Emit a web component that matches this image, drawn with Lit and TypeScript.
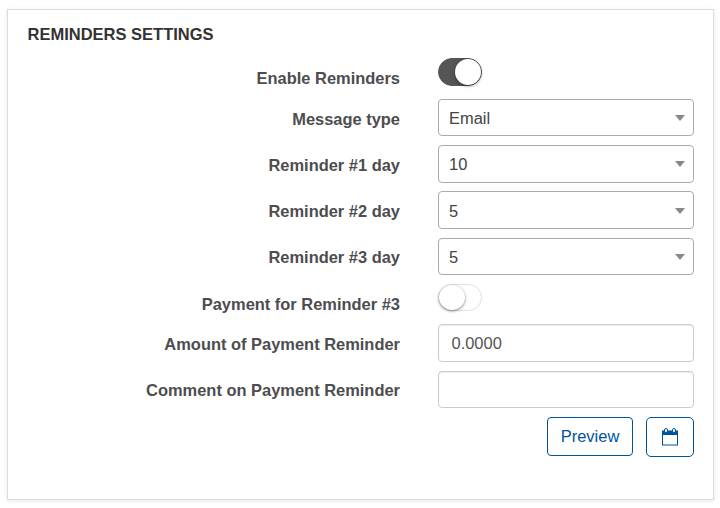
import { LitElement, html, css } from "lit";
import { customElement, property } from "lit/decorators.js";

@customElement("toggle-switch")
class ToggleSwitch extends LitElement {
  @property({ type: Boolean, reflect: true }) on = false;
  static styles = css`
    :host { display: block; width: 44px; height: 28px; }
    .track { box-sizing: border-box; display: flex; width: 44px; height: 27px; padding: 0; border: 1px solid #dfdfdf; border-radius: 14px; background: #fff; }
    :host([on]) .track { height: 28px; border-color: #555557; background: #555557; justify-content: flex-end; }
    .knob { width: 26px; height: 25px; border-radius: 50%; background: #fff; box-shadow: 0 1px 3px rgba(0, 0, 0, 0.5); }
    :host([on]) .knob { height: 26px; }
  `;
  render() {
    return html`<div class="track"><div class="knob"></div></div>`;
  }
}

@customElement("select-box")
class SelectBox extends LitElement {
  @property() value = "";
  static styles = css`
    :host { display: flex; box-sizing: border-box; height: 37.5px; border: 1px solid #aaa; border-radius: 4px; padding: 1px 8px 0 10px; align-items: center; justify-content: space-between; background: #fff; color: #444; }
    .arrow { border: 5px solid transparent; border-top: 6px solid #888; border-bottom: 0; }
  `;
  render() {
    return html`<span>${this.value}</span><span class="arrow"></span>`;
  }
}

@customElement("app-root")
class AppRoot extends LitElement {
  static styles = css`
    :host { display: block; box-sizing: border-box; height: 508px; padding: 9px 6px 8px 7px; background: #fff; font: 16.45px/24px "Liberation Sans", Arial, sans-serif; color: #4d4d4f; }
    .card { box-sizing: border-box; height: 491px; border: 1px solid #dcdcdc; box-shadow: 0 1px 4px rgba(0, 0, 0, 0.1); padding: 12px 19px 0 19.5px; }
    h1 { margin: 0; font-size: 16.5px; line-height: 24px; color: #333; }
    .form { padding-top: 12.4px; }
    .row { display: grid; grid-template-columns: 372px 256px; column-gap: 38px; height: 46.25px; margin-left: 0.5px; }
    .row.short { height: 40.5px; }
    .label { padding-top: 7.75px; text-align: right; font-weight: bold; }
    .input { box-sizing: border-box; height: 37.5px; border: 1px solid #ccc; border-radius: 4px; padding: 0 12.5px; line-height: 36px; box-shadow: inset 0 1px 1px rgba(0, 0, 0, 0.08); color: #555; }
    .actions { display: flex; justify-content: flex-end; gap: 13px; align-items: flex-start; }
    .btn { box-sizing: border-box; height: 39px; width: 86px; border: 1px solid #00539b; border-radius: 4px; display: flex; align-items: center; justify-content: center; color: #00539b; background: #fff; font: inherit; font-size: 16.5px; padding: 0; }
    .btn.icon { width: 48px; height: 40px; border-radius: 5px; }
  `;
  render() {
    const select = (label: string, value: string) =>
      html`<div class="row"><div class="label">${label}</div><select-box .value=${value}></select-box></div>`;
    const input = (label: string, value: string) =>
      html`<div class="row"><div class="label">${label}</div><div class="input">${value}</div></div>`;
    const toggle = (label: string, on: boolean) =>
      html`<div class="row short"><div class="label">${label}</div><toggle-switch ?on=${on}></toggle-switch></div>`;
    return html`
      <section class="card">
        <h1>REMINDERS SETTINGS</h1>
        <div class="form">
          ${toggle("Enable Reminders", true)}
          ${select("Message type", "Email")}
          ${select("Reminder #1 day", "10")}
          ${select("Reminder #2 day", "5")}
          ${select("Reminder #3 day", "5")}
          ${toggle("Payment for Reminder #3", false)}
          ${input("Amount of Payment Reminder", "0.0000")}
          ${input("Comment on Payment Reminder", "")}
          <div class="actions">
            <button class="btn">Preview</button>
            <button class="btn icon" aria-label="Calendar">
              <svg width="16" height="18" viewBox="0 0 16 18">
                <path d="M0 2.5h16V17.5H0z" fill="#00539b" />
                <path d="M1 7h14v9.5H1z" fill="#fff" />
                <path d="M2.5 4.3V2a1.5 1.5 0 0 1 3 0v2.3zM10.5 4.3V2a1.5 1.5 0 0 1 3 0v2.3z" fill="#fff" stroke="#00539b" stroke-width="1" />
              </svg>
            </button>
          </div>
        </div>
      </section>
    `;
  }
}
